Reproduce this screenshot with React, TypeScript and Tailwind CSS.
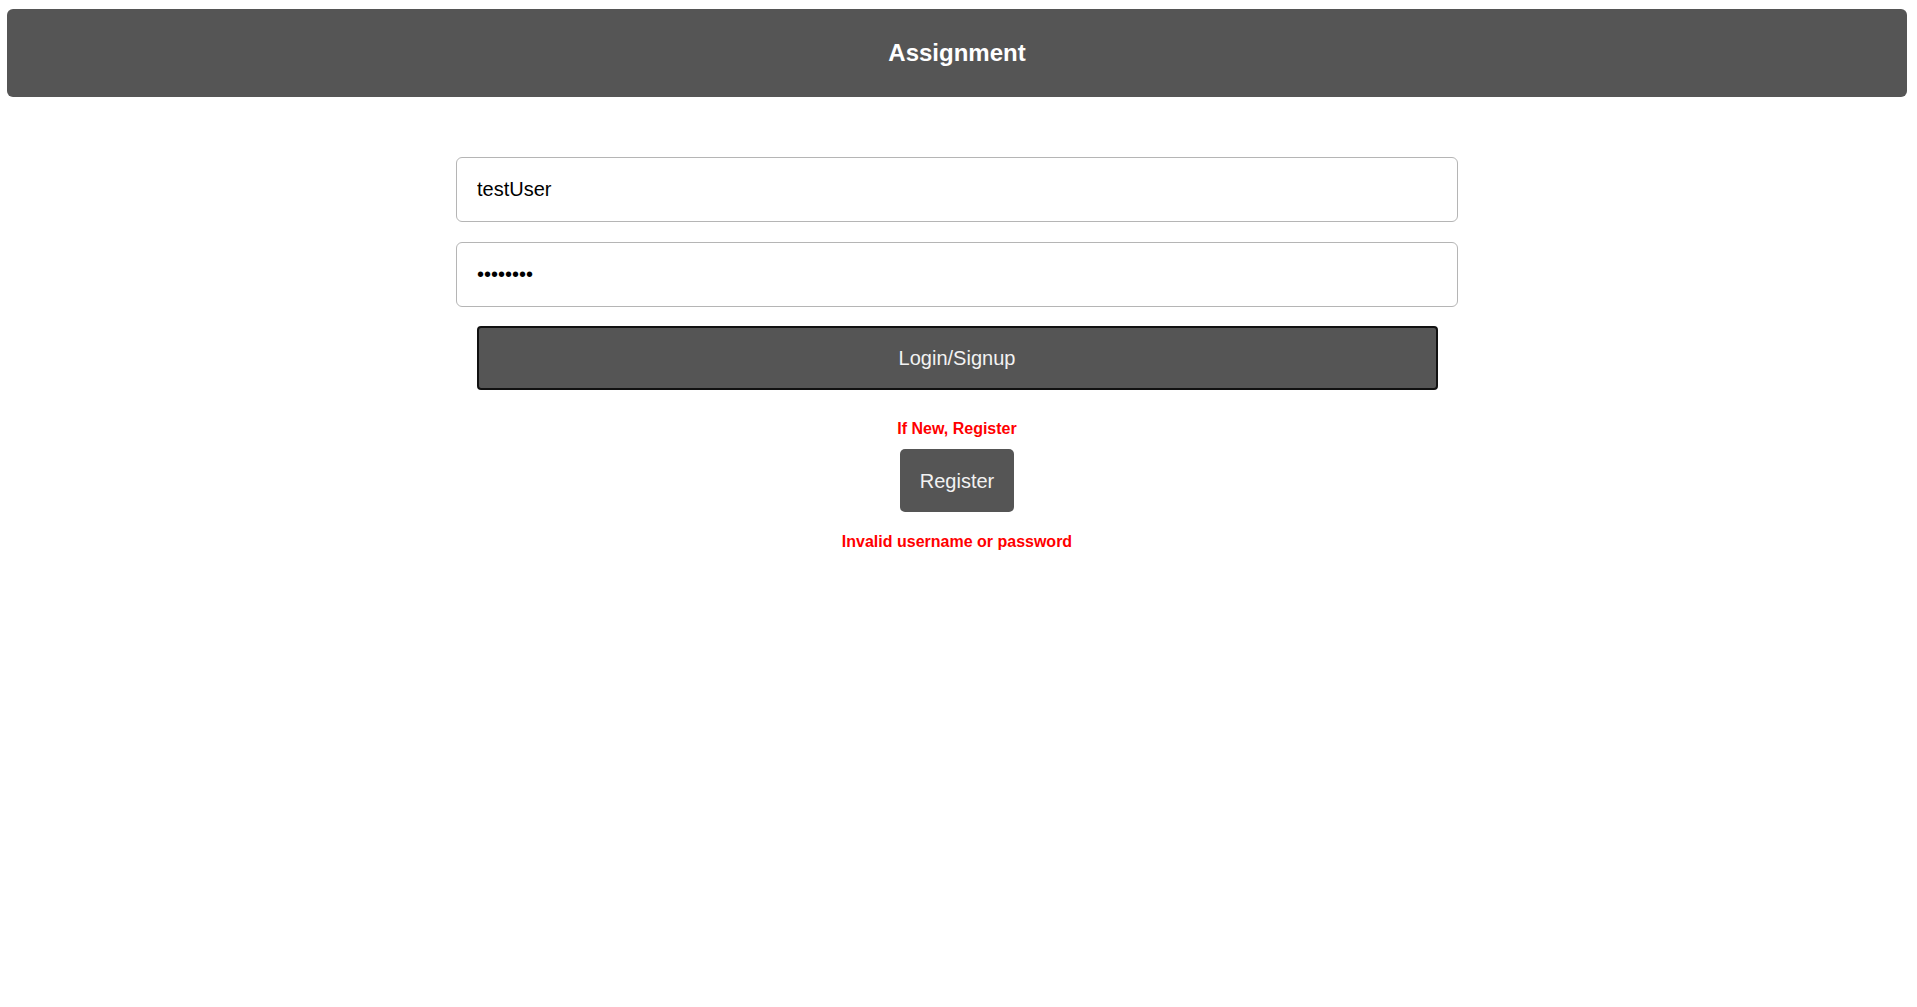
import React from "react";

const App: React.FC = () => {
  return (
    <div className="min-h-screen bg-white font-['Liberation_Sans',Arial,sans-serif]">
      <header className="ml-[7px] mt-[9px] w-[1900px] h-[88px] rounded-[6px] bg-[#555555] flex items-center justify-center">
        <h1 className="text-[24px] font-bold text-white">Assignment</h1>
      </header>

      <div className="ml-[456px] mt-[60px] w-[1002px] flex flex-col items-center">
        <input
          type="text"
          defaultValue="testUser"
          className="w-full h-[65px] px-[20px] text-[20px] text-black border border-[#b5b5b5] rounded-[6px] outline-none"
        />
        <input
          type="password"
          defaultValue="password"
          className="mt-[20px] w-full h-[65px] px-[20px] text-[20px] text-black border border-[#b5b5b5] rounded-[6px] outline-none"
        />
        <button className="mt-[19px] w-[961px] h-[64px] bg-[#555555] border-2 border-[#111111] rounded-[4px] text-[20px] text-[#f2f2f2]">
          Login/Signup
        </button>

        <p className="mt-[30px] text-[16px] leading-[18px] font-bold text-[#ff0000]">
          If New, Register
        </p>
        <button className="mt-[11px] w-[114px] h-[63px] bg-[#555555] rounded-[5px] text-[20px] text-[#f2f2f2]">
          Register
        </button>
        <p className="mt-[21px] text-[16px] leading-[18px] font-bold text-[#ff0000]">
          Invalid username or password
        </p>
      </div>
    </div>
  );
};

export default App;
